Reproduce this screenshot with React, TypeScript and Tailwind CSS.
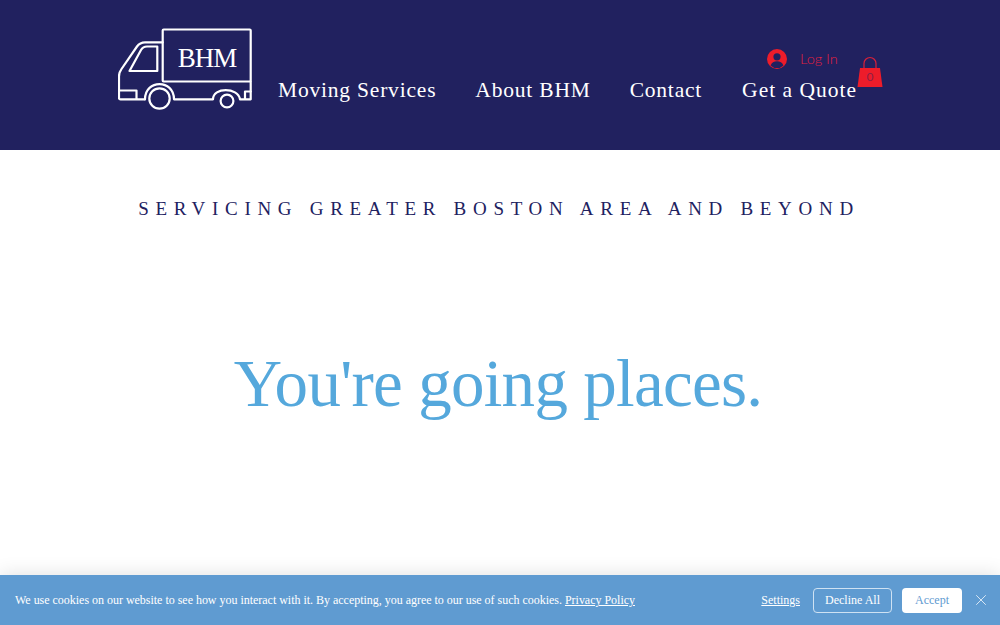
import React from "react";
import { X } from "lucide-react";

const Truck = () => (
  <svg width="136" height="86" viewBox="0 0 136 86" fill="none" stroke="#fff" strokeWidth="2.2" strokeLinejoin="round" strokeLinecap="round" className="shrink-0">
    <rect x="44.7" y="1.5" width="88" height="52" rx="1" />
    <path d="M44.7 14.3H27Q22 14.3 19 18.5L3.5 41Q1 44.5 1 48.5V70Q1 71.3 2.5 71.3H27" />
    <path d="M27 71.3C27 51 56 51 56 71.3H95C95 59 120 59 122 71.3H132.7V53.5" />
    <path d="M11.5 43L23 22Q25 18.5 29 18.5H39.3V43Z" />
    <circle cx="41.5" cy="70.5" r="10.2" />
    <circle cx="109" cy="73" r="6.4" />
    <path d="M1 62.5H18.5V71" />
    <path d="M127 71V63.5H132.7" />
    <text x="89" y="39" textAnchor="middle" fill="#fff" stroke="none" fontSize="27" letterSpacing="-1" style={{ fontFamily: '"Liberation Serif", serif' }}>BHM</text>
  </svg>
);

const Bag = () => (
  <svg width="26" height="33" viewBox="0 0 26 33" className="block">
    <path d="M7 14V8.5a6 6 0 0 1 12 0V14" fill="none" stroke="#d8203a" strokeWidth="1.2" />
    <path d="M3 13H23L25.5 32H.5Z" fill="#ed1c2a" />
  </svg>
);

const User = () => (
  <svg width="20" height="20" viewBox="0 0 20 20">
    <circle cx="10" cy="10" r="10" fill="#ed1c2a" />
    <circle cx="10" cy="7.8" r="3.6" fill="#21215f" />
    <path d="M3.6 16.4C4.6 13.3 7 12.3 10 12.3s5.4 1 6.4 4.1A9 9 0 0 1 3.6 16.4Z" fill="#21215f" />
  </svg>
);

export default function App() {
  return (
    <div className="relative h-[625px] w-full overflow-hidden bg-white" style={{ fontFamily: '"Liberation Serif", serif' }}>
      <header className="relative flex h-[150px] items-start bg-[#21215f] pl-[118px] pt-[28px]">
        <Truck />
        <nav className="ml-[24px] mt-[48px] flex gap-[39px] text-[21.5px] leading-[28px] tracking-[0.8px] text-white">
          <span>Moving Services</span>
          <span>About BHM</span>
          <span>Contact</span>
          <span className="ml-[1px] tracking-[1px]">Get a Quote</span>
        </nav>
        <div className="absolute left-[767px] top-[49px] flex items-center gap-[13px] text-[#e0203f]">
          <User />
          <span className="text-[14.5px] font-light leading-5" style={{ fontFamily: 'Lato, sans-serif' }}>Log In</span>
        </div>
        <div className="absolute left-[857px] top-[55px]">
          <Bag />
          <span className="absolute inset-x-0 top-[14px] text-center text-[12px] leading-4 text-[#8f1f45]" style={{ fontFamily: 'Lato, sans-serif' }}>0</span>
        </div>
      </header>
      <main className="flex flex-col items-center">
        <p className="mt-[47px] pr-[2px] text-[19px] leading-[24px] tracking-[6.7px] whitespace-nowrap text-[#21215f]">SERVICING GREATER BOSTON AREA AND BEYOND</p>
        <h1 className="mt-[122px] pr-[4px] text-[67px] leading-[80px] tracking-[-0.72px] whitespace-nowrap text-[#55a8dc]">You're going places.</h1>
      </main>
      <div className="absolute inset-x-0 bottom-0 flex h-[50px] items-center bg-[#5f9bd1] pl-[15px] pr-[10px] text-white shadow-[0_0_20px_rgba(0,0,0,0.13)]">
        <p className="flex-1 text-[12px] tracking-[-0.02px] whitespace-nowrap">
          We use cookies on our website to see how you interact with it. By accepting, you agree to our use of such cookies. <span className="underline">Privacy Policy</span>
        </p>
        <span className="mr-[13px] text-[12px] underline">Settings</span>
        <button className="h-[25px] w-[79px] rounded-[4px] border border-[#cfe2f3] text-[12px]">Decline All</button>
        <button className="ml-[10px] h-[25px] w-[60px] rounded-[4px] bg-white text-[12px] text-[#5f9bd1]">Accept</button>
        <X className="ml-[10px]" size={18} strokeWidth={1} />
      </div>
    </div>
  );
}
